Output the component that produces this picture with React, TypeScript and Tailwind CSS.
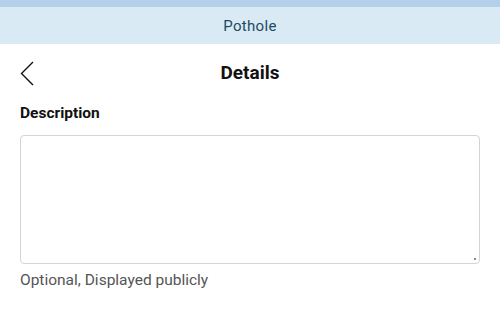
export default function App() {
  return (
    <div className="w-[500px] h-[320px] bg-white font-['Roboto',sans-serif] overflow-hidden">
      <div className="h-[7px] bg-[#b3cfea]" />
      <div className="h-[37px] bg-[#d9eaf5] flex items-center justify-center">
        <span className="text-[15px] text-[#1d4a63] tracking-[0.3px] mt-[1px]">Pothole</span>
      </div>

      <div className="relative h-[58px] flex items-center justify-center">
        <button className="absolute left-[20px] top-[16px] h-[26px] w-[16px] flex items-center">
          <svg width="14" height="25" viewBox="0 0 14 25" fill="none">
            <path d="M13 1 L1.5 12.5 L13 24" stroke="#111" strokeWidth="1.4" />
          </svg>
        </button>
        <h1 className="text-[19px] font-bold text-[#111]">Details</h1>
      </div>

      <div className="px-[20px]">
        <label className="block text-[15.5px] font-bold text-[#111] leading-none mt-[4px]">Description</label>
        <div className="relative mt-[13px]">
          <textarea className="block w-full h-[129px] border-[1.5px] border-[#d4d4d8] rounded-[4px] outline-none resize-none" />
          <span className="absolute right-[4px] bottom-[4px] w-[2px] h-[2px] bg-[#888]" />
        </div>
        <p className="mt-[6px] text-[15.5px] text-[#555] leading-[20px]">Optional, Displayed publicly</p>
      </div>
    </div>
  );
}
